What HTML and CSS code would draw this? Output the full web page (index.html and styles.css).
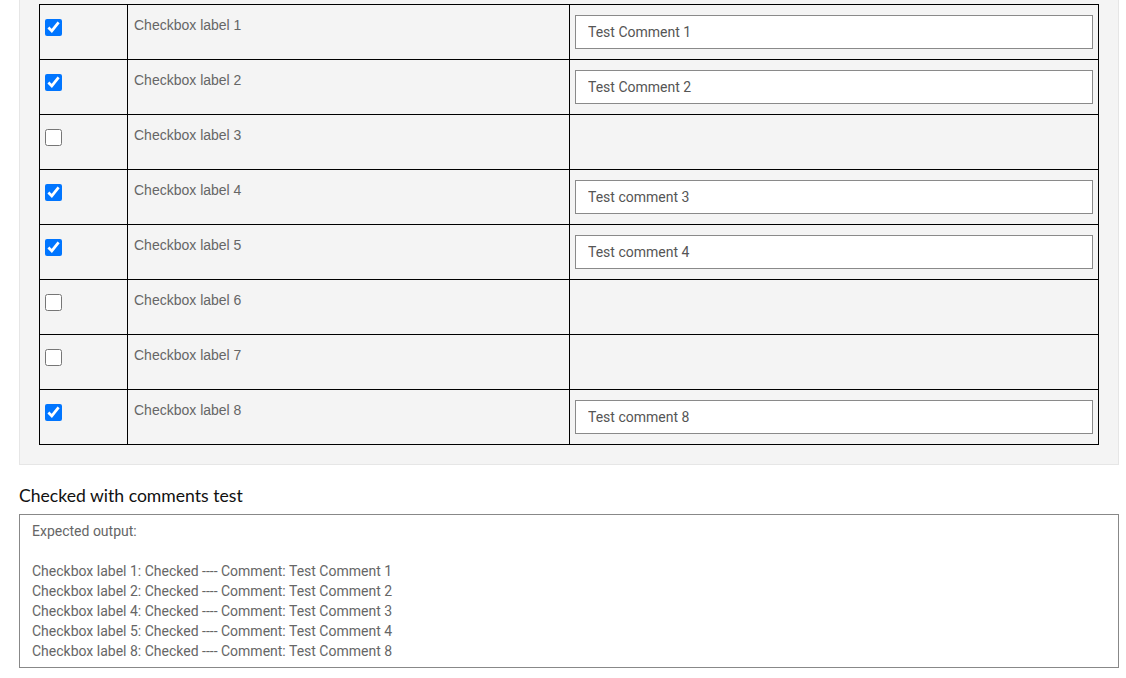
FILE: index.html
```html
<!DOCTYPE html>
<html lang="en">
<head>
    <meta charset="UTF-8">
    <meta name="viewport" content="width=device-width, initial-scale=1.0">
    <title>Checkbox Comments Test</title>
    <link rel="stylesheet" href="styles.css">
</head>
<body>

    <div class="page">
        <div class="panel">
            <table class="check-table">
                <tr>
                    <td class="col-check"><input type="checkbox" checked></td>
                    <td class="col-label">Checkbox label 1</td>
                    <td class="col-comment"><input type="text" class="comment" value="Test Comment 1"></td>
                </tr>
                <tr>
                    <td class="col-check"><input type="checkbox" checked></td>
                    <td class="col-label">Checkbox label 2</td>
                    <td class="col-comment"><input type="text" class="comment" value="Test Comment 2"></td>
                </tr>
                <tr>
                    <td class="col-check"><input type="checkbox"></td>
                    <td class="col-label">Checkbox label 3</td>
                    <td class="col-comment"></td>
                </tr>
                <tr>
                    <td class="col-check"><input type="checkbox" checked></td>
                    <td class="col-label">Checkbox label 4</td>
                    <td class="col-comment"><input type="text" class="comment" value="Test comment 3"></td>
                </tr>
                <tr>
                    <td class="col-check"><input type="checkbox" checked></td>
                    <td class="col-label">Checkbox label 5</td>
                    <td class="col-comment"><input type="text" class="comment" value="Test comment 4"></td>
                </tr>
                <tr>
                    <td class="col-check"><input type="checkbox"></td>
                    <td class="col-label">Checkbox label 6</td>
                    <td class="col-comment"></td>
                </tr>
                <tr>
                    <td class="col-check"><input type="checkbox"></td>
                    <td class="col-label">Checkbox label 7</td>
                    <td class="col-comment"></td>
                </tr>
                <tr>
                    <td class="col-check"><input type="checkbox" checked></td>
                    <td class="col-label">Checkbox label 8</td>
                    <td class="col-comment"><input type="text" class="comment" value="Test comment 8"></td>
                </tr>
            </table>
        </div>

        <h3 class="output-title">Checked with comments test</h3>
        <div class="output-box">Expected output:

Checkbox label 1: Checked ---- Comment: Test Comment 1
Checkbox label 2: Checked ---- Comment: Test Comment 2
Checkbox label 4: Checked ---- Comment: Test Comment 3
Checkbox label 5: Checked ---- Comment: Test Comment 4
Checkbox label 8: Checked ---- Comment: Test Comment 8</div>
    </div>

</body>
</html>
```

FILE: styles.css
```css
body {
    margin: 0;
    padding: 0;
    background: #fff;
    font-family: Roboto, "Liberation Sans", sans-serif;
}

.page {
    margin: 0 7px 0 19px;
}

.panel {
    margin-top: -17px;
    padding: 20px 19px 19px 19px;
    background: #f4f4f4;
    border: 1px solid #e6e6e6;
}

.check-table {
    width: 100%;
    border-collapse: collapse;
    table-layout: fixed;
}

.check-table td {
    border: 1px solid #000;
    height: 55px;
    padding: 10px 5px 9px 5px;
    vertical-align: top;
    box-sizing: border-box;
}

.col-check {
    width: 88px;
}

.col-label {
    width: 442px;
    font-family: "Liberation Sans", Arial, sans-serif;
    font-size: 14px;
    color: #666;
    padding-top: 12px !important;
    padding-left: 6px !important;
}

.col-check input {
    width: 17px;
    height: 17px;
    margin: 4px 0 0 0;
    accent-color: #0075ff;
}

.comment {
    display: block;
    width: 100%;
    height: 34px;
    box-sizing: border-box;
    border: 1px solid #8a8a8a;
    border-radius: 0;
    padding: 0 12px;
    font-family: Roboto, sans-serif;
    font-size: 14px;
    color: #555;
    background: #fff;
}

.output-title {
    margin: 20px 0 7px 0;
    font-family: Lato, sans-serif;
    font-size: 17.6px;
    line-height: 22px;
    font-weight: normal;
    color: #111;
}

.output-box {
    border: 1px solid #888;
    padding: 6px 12px;
    font-size: 14px;
    line-height: 20px;
    color: #666;
    white-space: pre-line;
}
```
